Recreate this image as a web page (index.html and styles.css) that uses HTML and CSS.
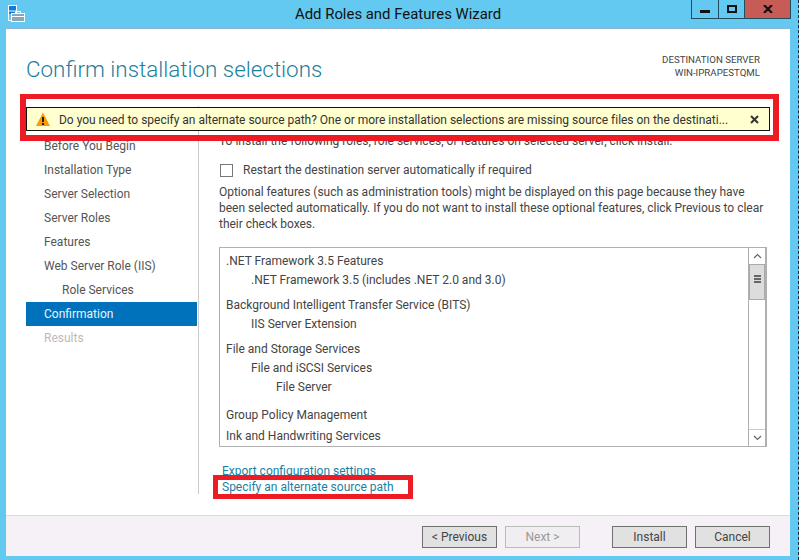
FILE: index.html
```html
<!DOCTYPE html>
<html lang="en">
<head>
  <meta charset="UTF-8">
  <title>Add Roles and Features Wizard</title>
  <link rel="stylesheet" href="styles.css">
</head>
<body>

<div class="window">
  <div class="titlebar">
    <svg class="app-icon" width="18" height="18" viewBox="0 0 18 18">
      <rect x=".5" y=".5" width="8" height="15" fill="#63c9f0" stroke="#fff"/>
      <rect x="1" y="1" width="7" height="4" fill="#1b78d0"/>
      <rect x="1" y="7" width="7" height="2" fill="#1b78d0"/>
      <rect x="3.5" y="8.5" width="13" height="8" fill="#8ba6b8" stroke="#fff"/>
      <path d="M3.5 11.5h13M7.5 8V6.500h5V8" fill="none" stroke="#fff"/>
    </svg>
    <div class="title">Add Roles and Features Wizard</div>
    <div class="caption-btns">
      <div class="cap cap-min"><span class="min-bar"></span></div>
      <div class="cap cap-max"><span class="max-box"></span></div>
      <div class="cap cap-close">
        <svg width="10" height="8" viewBox="0 0 10 8"><path d="M1 0l8 8M9 0l-8 8" stroke="#111" stroke-width="2.2"/></svg>
      </div>
    </div>
  </div>

  <div class="page">
    <div class="page-head">
      <h1>Confirm installation selections</h1>
      <div class="dest">DESTINATION SERVER<br>WIN-IPRAPESTQML</div>
    </div>

    <div class="main">
      <ul class="steps">
        <li>Before You Begin</li>
        <li>Installation Type</li>
        <li>Server Selection</li>
        <li>Server Roles</li>
        <li>Features</li>
        <li>Web Server Role (IIS)</li>
        <li class="sub">Role Services</li>
        <li class="active">Confirmation</li>
        <li class="disabled">Results</li>
      </ul>

      <div class="content">
        <p class="intro">To install the following roles, role services, or features on selected server, click Install.</p>
        <label class="restart"><span class="checkbox"></span>Restart the destination server automatically if required</label>
        <p class="note">Optional features (such as administration tools) might be displayed on this page because they have been selected automatically. If you do not want to install these optional features, click Previous to clear their check boxes.</p>

        <div class="listbox">
          <div class="list-items">
            <div class="group">.NET Framework 3.5 Features</div>
            <div class="lvl1">.NET Framework 3.5 (includes .NET 2.0 and 3.0)</div>
            <div class="group">Background Intelligent Transfer Service (BITS)</div>
            <div class="lvl1">IIS Server Extension</div>
            <div class="group">File and Storage Services</div>
            <div class="lvl1">File and iSCSI Services</div>
            <div class="lvl2">File Server</div>
            <div class="group after-tree">Group Policy Management</div>
            <div class="group tight">Ink and Handwriting Services</div>
          </div>
          <div class="scrollbar">
            <div class="arrow"><svg width="9" height="6" viewBox="0 0 9 6"><path d="M1 5l3.5-3.5L8 5" fill="none" stroke="#666" stroke-width="1.2"/></svg></div>
            <div class="thumb"><span></span><span></span><span></span></div>
            <div class="track"></div>
            <div class="arrow"><svg width="9" height="6" viewBox="0 0 9 6"><path d="M1 1l3.5 3.5L8 1" fill="none" stroke="#666" stroke-width="1.2"/></svg></div>
          </div>
        </div>

        <div class="links">
          <a>Export configuration settings</a>
          <a>Specify an alternate source path</a>
        </div>
      </div>
    </div>

    <div class="footer">
      <div class="btn-pair">
        <button>&lt; Previous</button>
        <button disabled>Next &gt;</button>
      </div>
      <div class="btn-pair">
        <button>Install</button>
        <button>Cancel</button>
      </div>
    </div>
  </div>

  <!-- warning bar sits over the top of the content -->
  <div class="warning">
    <svg class="warning-icon" width="14" height="14" viewBox="0 0 14 14">
      <path d="M7 .5L14 14H0z" fill="#f79a0e"/>
      <rect x="6" y="5" width="2" height="5" fill="#222"/>
      <rect x="6" y="11" width="2" height="2" fill="#222"/>
    </svg>
    <span class="warning-text">Do you need to specify an alternate source path? One or more installation selections are missing source files on the destinati...</span>
    <svg class="warning-close" width="9" height="9" viewBox="0 0 9 9"><path d="M1 1l7 7M8 1l-7 7" stroke="#333" stroke-width="2"/></svg>
  </div>

  <!-- red annotation boxes drawn on the screenshot -->
  <div class="mark mark-top"></div>
  <div class="mark mark-link"></div>
</div>

</body>
</html>
```

FILE: styles.css
```css
html, body {
  margin: 0;
  height: 100%;
  overflow: hidden;
}
body {
  font-family: Roboto, "Noto Sans", sans-serif;
  font-size: 12px;
  color: #444;
}
.window {
  position: relative;
  box-sizing: border-box;
  width: 799px;
  height: 560px;
  background: #63c9f0;
  padding: 0 8px 4px 6px;
  border-right: 1px dashed #223;
  display: flex;
  flex-direction: column;
}

/* title bar */
.titlebar {
  height: 28px;
  flex: none;
  display: flex;
  position: relative;
}
.app-icon {
  flex: none;
  margin: 5px 0 0 2px;
}
.title {
  position: absolute;
  left: 289px;
  top: 5px;
  width: 206px;
  text-align: center;
  font-size: 14.9px;
  color: #111;
  white-space: nowrap;
}
.caption-btns {
  margin-left: auto;
  margin-right: -1px;
  display: flex;
  height: 19px;
}
.cap {
  box-sizing: border-box;
  border: 1px solid #1f4e60;
  border-top: 0;
  display: flex;
  align-items: center;
  justify-content: center;
}
.cap-min { width: 28px; }
.cap-max { width: 26px; border-left: 0; }
.cap-close { width: 46px; background: #c75b55; border-left: 0; }
.min-bar {
  width: 10px;
  height: 3px;
  background: #111;
  margin-top: 5px;
}
.max-box {
  box-sizing: border-box;
  width: 10px;
  height: 8px;
  border: 2px solid #111;
}

/* page */
.page {
  flex: 1;
  background: #fff;
  border-top: 1px solid #8db4d0;
  display: flex;
  flex-direction: column;
  min-height: 0;
}
.page-head {
  height: 77px;
  flex: none;
  display: flex;
  justify-content: space-between;
  padding: 0 30px 0 20px;
}
h1 {
  margin: 23px 0 0;
  font-size: 22.4px;
  font-weight: 300;
  color: #1b7f9f;
  line-height: 34px;
}
.dest {
  margin-top: 24px;
  font-size: 9.7px;
  line-height: 13px;
  text-align: right;
  color: #444;
}

.main {
  flex: 1;
  display: flex;
  min-height: 0;
}
.steps {
  list-style: none;
  margin: 0;
  padding: 28px 0 0;
  margin-left: 20px;
  width: 171px;
  flex: none;
}
.steps li {
  height: 24px;
  line-height: 24px;
  padding-left: 18px;
  color: #555;
}
.steps .sub { padding-left: 36px; }
.steps .active {
  background: #0072bc;
  color: #e8f4fb;
}
.steps .disabled { color: #bbb; }

.content {
  flex: 1;
  border-left: 1px solid #ccc;
  margin-left: 1px;
  padding-left: 20px;
  margin-bottom: 21px;
  min-width: 0;
}
.intro {
  margin: 0;
  padding-top: 27px;
  line-height: 16px;
  height: 16px;
  white-space: nowrap;
}
.restart {
  display: flex;
  align-items: center;
  margin-top: 13px;
  height: 16px;
  color: #444;
}
.checkbox {
  box-sizing: border-box;
  width: 13px;
  height: 13px;
  border: 1px solid #777;
  margin-right: 10px;
  margin-left: 1px;
}
.note {
  margin: 6px 0 0;
  width: 548px;
  line-height: 16px;
  letter-spacing: -0.02px;
}
.listbox {
  box-sizing: border-box;
  width: 548px;
  height: 200px;
  margin-top: 15px;
  border: 1px solid #b0b0b0;
  border-right-width: 2px;
  display: flex;
  overflow: hidden;
}
.list-items {
  flex: 1;
  padding: 4px 6px;
}
.group, .lvl1, .lvl2 {
  line-height: 19px;
}
.group { margin-top: 6px; }
.group:first-child { margin-top: 0; }
.group.after-tree { margin-top: 9px; }
.group.tight { margin-top: 2px; }
.lvl1 { padding-left: 25px; }
.lvl2 { padding-left: 50px; }
.scrollbar {
  width: 16px;
  flex: none;
  border-left: 1px solid #b0b0b0;
  display: flex;
  flex-direction: column;
}
.arrow {
  height: 16px;
  flex: none;
  display: flex;
  align-items: center;
  justify-content: center;
}
.thumb {
  box-sizing: border-box;
  height: 36px;
  flex: none;
  background: #dcdcdc;
  border: 1px solid #aaa;
  display: flex;
  flex-direction: column;
  align-items: center;
  justify-content: center;
  gap: 1px;
  padding-bottom: 7px;
}
.thumb span {
  width: 7px;
  height: 2px;
  background: #666;
}
.track {
  flex: 1;
  border-bottom: 1px solid #ccc;
}
.links {
  margin-top: 16px;
  margin-left: 3px;
  display: flex;
  flex-direction: column;
  align-items: flex-start;
  line-height: 16px;
}
.links a {
  color: #1b7f9f;
}

/* footer */
.footer {
  height: 41px;
  flex: none;
  box-sizing: border-box;
  background: #f5f1f6;
  border-top: 1px solid #dcdcdc;
  padding: 10px 20px 0 416px;
  display: flex;
  justify-content: space-between;
}
.btn-pair {
  display: flex;
  gap: 8px;
}
button {
  box-sizing: border-box;
  width: 75px;
  height: 22px;
  padding: 0;
  font: inherit;
  color: #444;
  background: #e1e1e1;
  border: 1px solid #707070;
  border-radius: 0;
}
button:disabled {
  background: #f0eef1;
  border-color: #bbb;
  color: #999;
}

/* overlays */
.warning {
  position: absolute;
  left: 26px;
  top: 107px;
  box-sizing: border-box;
  width: 744px;
  height: 24px;
  background: #ffffcf;
  border: 1px solid #111;
  display: flex;
  align-items: center;
  padding: 0 10px 0 9px;
  color: #333;
}
.warning-icon {
  flex: none;
}
.warning-text {
  margin-left: 9px;
  padding-top: 2px;
  white-space: nowrap;
  letter-spacing: -0.02px;
}
.warning-close {
  flex: none;
  margin-left: auto;
}
.mark {
  position: absolute;
  box-sizing: border-box;
  border: 5px solid #ed1c24;
}
.mark-top {
  left: 20px;
  top: 94px;
  width: 759px;
  height: 47px;
  border-width: 5px 6px 6px 6px;
}
.mark-link {
  left: 213px;
  top: 475px;
  width: 200px;
  height: 24px;
}
```
